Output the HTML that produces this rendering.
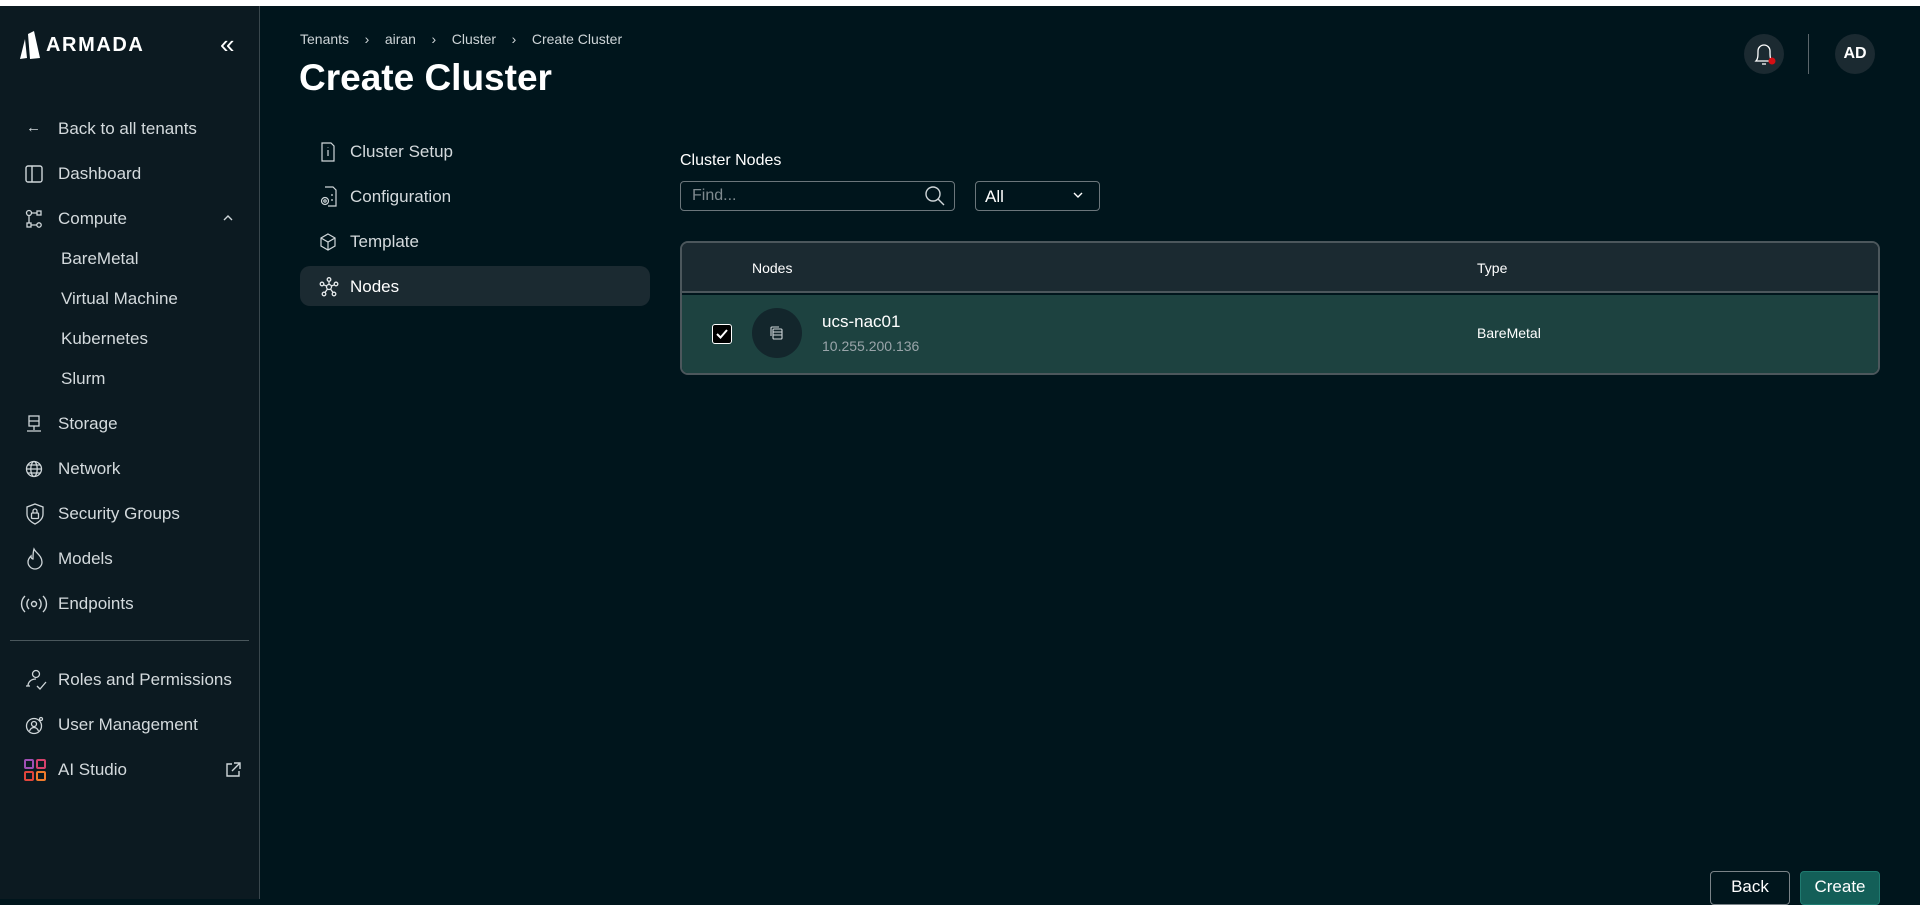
<!DOCTYPE html>
<html><head><style>
*{box-sizing:border-box;margin:0;padding:0}
body{width:1920px;height:899px;background:#00151c;font-family:"Liberation Sans",sans-serif;color:#e4e8ea;position:relative;overflow:hidden}
.top{position:absolute;left:0;top:0;width:1920px;height:6px;background:#fff}
.side{position:absolute;left:0;top:6px;width:260px;height:893px;background:#0c1a21;border-right:1px solid #3a474d}
.a{position:absolute;white-space:nowrap}
.nav{position:absolute;left:58px;font-size:17px;color:#d4dadd;transform:translateY(-50%)}
.sub{left:61px}
.ic{position:absolute;left:24px;transform:translateY(-50%)}
.step{position:absolute;left:350px;font-size:17px;color:#d4dadd;transform:translateY(-50%)}
.sic{position:absolute;left:319px;transform:translateY(-50%)}
</style></head><body>
<div class="top"></div>
<div class="side"></div>
<svg class="a" style="left:17px;top:31px" width="30" height="30" viewBox="0 0 30 30"><path d="M3 28 L8 8 L10 27Z M11 3 L17 0 L23 27 L13 28Z" fill="#fff"/></svg>
<div class="a" style="left:46px;top:34px;font-size:20px;font-weight:bold;letter-spacing:1.6px;color:#fff">ARMADA</div>
<div class="a" style="left:220px;top:29px;font-size:26px;color:#fff">«</div>

<div class="a" style="left:26px;top:119px;font-size:15px;color:#cfd6d9">←</div>
<div class="nav" style="top:129px">Back to all tenants</div>
<svg class="ic" style="top:174px" width="20" height="20" viewBox="0 0 20 20" fill="none" stroke="#cfd6d9" stroke-width="1.4"><rect x="2" y="2" width="16" height="16" rx="2"/><path d="M8 2v16"/></svg>
<div class="nav" style="top:174px">Dashboard</div>
<svg class="ic" style="top:219px" width="20" height="20" viewBox="0 0 20 20" fill="none" stroke="#cfd6d9" stroke-width="1.3"><circle cx="5" cy="4" r="2.5"/><rect x="13" y="2" width="4" height="4"/><rect x="3" y="14" width="4" height="4"/><circle cx="15" cy="16" r="2.2"/><path d="M5 7v7M7 16h6M7.5 4h5"/></svg>
<div class="nav" style="top:219px">Compute</div>
<svg class="a" style="left:222px;top:213px" width="12" height="10" viewBox="0 0 12 10" fill="none" stroke="#cfd6d9" stroke-width="1.4"><path d="M2 7l4-4 4 4"/></svg>
<div class="nav sub" style="top:259px">BareMetal</div>
<div class="nav sub" style="top:299px">Virtual Machine</div>
<div class="nav sub" style="top:339px">Kubernetes</div>
<div class="nav sub" style="top:379px">Slurm</div>
<svg class="ic" style="top:424px" width="20" height="20" viewBox="0 0 20 20" fill="none" stroke="#cfd6d9" stroke-width="1.3"><rect x="5" y="2" width="10" height="10"/><path d="M5 7h10M10 12v4M3 17h14"/></svg>
<div class="nav" style="top:424px">Storage</div>
<svg class="ic" style="top:469px" width="20" height="20" viewBox="0 0 20 20" fill="none" stroke="#cfd6d9" stroke-width="1.3"><circle cx="10" cy="10" r="7.5"/><ellipse cx="10" cy="10" rx="3.2" ry="7.5"/><path d="M2.5 10h15M4 6h12M4 14h12"/></svg>
<div class="nav" style="top:469px">Network</div>
<svg class="ic" style="top:514px" width="22" height="24" viewBox="0 0 22 24" fill="none" stroke="#cfd6d9" stroke-width="1.3"><path d="M11 2 L19 5 V12 C19 17 15 20 11 22 C7 20 3 17 3 12 V5Z"/><rect x="7.5" y="11" width="7" height="5.5" rx="1"/><path d="M9 11V9a2 2 0 0 1 4 0v2"/></svg>
<div class="nav" style="top:514px">Security Groups</div>
<svg class="ic" style="top:559px" width="22" height="24" viewBox="0 0 22 24" fill="none" stroke="#cfd6d9" stroke-width="1.3"><path d="M10 2 C12 6 18 9 18 15 A7 7 0 0 1 4 15 C4 12 6 10 7 9 C7 11 8 12 9 12 C9 8 9 5 10 2Z"/></svg>
<div class="nav" style="top:559px">Models</div>
<svg class="a" style="left:20px;top:594px" width="28" height="20" viewBox="0 0 28 20" fill="none" stroke="#cfd6d9" stroke-width="1.4"><circle cx="14" cy="10" r="2.5"/><path d="M9 5a7 7 0 0 0 0 10M19 5a7 7 0 0 1 0 10M5 2a11 11 0 0 0 0 16M23 2a11 11 0 0 1 0 16"/></svg>
<div class="nav" style="top:604px">Endpoints</div>
<div class="a" style="left:10px;top:640px;width:239px;height:1px;background:#4a575c"></div>
<svg class="ic" style="top:680px" width="24" height="24" viewBox="0 0 24 24" fill="none" stroke="#cfd6d9" stroke-width="1.3"><circle cx="12" cy="6" r="3.5"/><path d="M4 18c0-4 3-7 8-7M2 18h4M13 18l3 3 6-7"/></svg>
<div class="nav" style="top:680px">Roles and Permissions</div>
<svg class="ic" style="top:725px" width="22" height="22" viewBox="0 0 22 22" fill="none" stroke="#cfd6d9" stroke-width="1.3"><circle cx="10" cy="12" r="7.5"/><circle cx="10" cy="10" r="2.5"/><path d="M5.5 17c1-2.5 3-3.5 4.5-3.5s3.5 1 4.5 3.5"/><circle cx="17" cy="5" r="1.5"/></svg>
<div class="nav" style="top:725px">User Management</div>
<svg class="ic" style="top:770px" width="22" height="22" viewBox="0 0 22 22" fill="none" stroke-width="2"><rect x="1" y="1" width="8" height="8" rx="1" stroke="#a04fb5"/><rect x="13" y="1" width="8" height="8" rx="1" stroke="#d6416b"/><rect x="1" y="13" width="8" height="8" rx="1" stroke="#e2463c"/><rect x="13" y="13" width="8" height="8" rx="1" stroke="#f07b2c"/></svg>
<div class="nav" style="top:770px">AI Studio</div>
<svg class="a" style="left:224px;top:761px" width="18" height="18" viewBox="0 0 18 18" fill="none" stroke="#cfd6d9" stroke-width="1.4"><path d="M8 3H3v12h12v-5M10 2h6v6M16 2L8 10"/></svg>

<div class="a" style="left:300px;top:31px;font-size:14px;color:#cdd4d7">Tenants &nbsp;&nbsp;&nbsp;›&nbsp;&nbsp;&nbsp; airan &nbsp;&nbsp;&nbsp;›&nbsp;&nbsp;&nbsp; Cluster &nbsp;&nbsp;&nbsp;›&nbsp;&nbsp;&nbsp; Create Cluster</div>
<div class="a" style="left:299px;top:57px;font-size:37px;font-weight:bold;color:#fff">Create Cluster</div>

<div class="a" style="left:1744px;top:34px;width:40px;height:40px;border-radius:50%;background:#1b2a31"></div>
<svg class="a" style="left:1752px;top:40px" width="26" height="28" viewBox="0 0 26 28" fill="none" stroke="#fff" stroke-width="1.3"><path d="M4 21 C6 19 6 16 6 11 A6 6 0 0 1 18 11 C18 16 18 19 20 21Z M10 24h4"/><circle cx="20" cy="21" r="3.5" fill="#d40f14" stroke="none"/></svg>
<div class="a" style="left:1808px;top:34px;width:1px;height:40px;background:#5b666b"></div>
<div class="a" style="left:1835px;top:34px;width:40px;height:40px;border-radius:50%;background:#1b2a31;color:#fff;font-weight:bold;font-size:16px;text-align:center;line-height:40px">AD</div>

<svg class="sic" style="top:152px" width="18" height="20" viewBox="0 0 18 20" fill="none" stroke="#cfd6d9" stroke-width="1.2"><path d="M3 1h9l3 3v15H3z"/><path d="M9 8v6M9 5.5v.5"/></svg>
<div class="step" style="top:152px">Cluster Setup</div>
<svg class="sic" style="top:197px" width="20" height="22" viewBox="0 0 20 22" fill="none" stroke="#cfd6d9" stroke-width="1.2"><path d="M6 1h8l3 3v16H9"/><circle cx="6" cy="15" r="3.5"/><circle cx="6" cy="15" r="1.2"/><path d="M12 9h2M12 14h2"/></svg>
<div class="step" style="top:197px">Configuration</div>
<svg class="sic" style="top:242px" width="18" height="18" viewBox="0 0 18 18" fill="none" stroke="#cfd6d9" stroke-width="1.2"><path d="M9 1l7 4v8l-7 4-7-4V5z M2 5l7 4 7-4M9 9v8"/></svg>
<div class="step" style="top:242px">Template</div>
<div class="a" style="left:300px;top:266px;width:350px;height:40px;border-radius:10px;background:#1b2a31"></div>
<svg class="sic" style="top:287px" width="20" height="20" viewBox="0 0 20 20" fill="none" stroke="#e4e8ea" stroke-width="1.3"><circle cx="10" cy="10" r="2.5"/><circle cx="10" cy="2.5" r="1.8"/><circle cx="3" cy="7" r="1.8"/><circle cx="17" cy="7" r="1.8"/><circle cx="5" cy="17" r="1.8"/><circle cx="15" cy="17" r="1.8"/><path d="M10 4.3v3M4.6 7.8l3 1.2M15.4 7.8l-3 1.2M6 15.5l2.5-3.5M14 15.5l-2.5-3.5"/></svg>
<div class="step" style="top:287px;color:#fff">Nodes</div>

<div class="a" style="left:680px;top:152px;font-size:16px;color:#fff">Cluster Nodes</div>
<div class="a" style="left:680px;top:181px;width:275px;height:30px;border:1px solid #6b767b;border-radius:4px"></div>
<div class="a" style="left:692px;top:187px;font-size:16px;color:#7f8a8f">Find...</div>
<svg class="a" style="left:923px;top:184px" width="24" height="24" viewBox="0 0 24 24" fill="none" stroke="#cfd6d9" stroke-width="1.4"><circle cx="10" cy="10" r="7"/><path d="M15 15l6 6"/></svg>
<div class="a" style="left:975px;top:181px;width:125px;height:30px;border:1px solid #6b767b;border-radius:4px"></div>
<div class="a" style="left:985px;top:187px;font-size:17px;color:#fff">All</div>
<svg class="a" style="left:1072px;top:190px" width="12" height="10" viewBox="0 0 12 10" fill="none" stroke="#fff" stroke-width="1.4"><path d="M2 3l4 4 4-4"/></svg>

<div class="a" style="left:680px;top:241px;width:1200px;height:134px;border:2px solid #4c575c;border-radius:8px;overflow:hidden">
 <div style="position:absolute;left:0;top:0;width:100%;height:50px;background:#1b2a31;border-bottom:2px solid #4c575c"></div>
 <div style="position:absolute;left:0;top:52px;width:100%;height:80px;background:#1d4240"></div>
</div>
<div class="a" style="left:752px;top:260px;font-size:14px;color:#fff">Nodes</div>
<div class="a" style="left:1477px;top:260px;font-size:14px;color:#fff">Type</div>
<div class="a" style="left:712px;top:324px;width:20px;height:20px;border:1.5px solid #fff;border-radius:3px;background:#000"></div>
<svg class="a" style="left:714px;top:326px" width="16" height="16" viewBox="0 0 16 16" fill="none" stroke="#fff" stroke-width="2"><path d="M3 8l3.5 3.5L13 4"/></svg>
<div class="a" style="left:752px;top:308px;width:50px;height:50px;border-radius:50%;background:#13262c"></div>
<svg class="a" style="left:769px;top:325px" width="16" height="16" viewBox="0 0 16 16" fill="none" stroke="#cfd6d9" stroke-width="1.1"><rect x="4" y="4" width="9" height="10" rx="1"/><path d="M4 7h9M4 10h9M2 11V3a1 1 0 0 1 1-1h7"/></svg>
<div class="a" style="left:822px;top:312px;font-size:17px;color:#fff">ucs-nac01</div>
<div class="a" style="left:822px;top:338px;font-size:14px;color:#9aa5aa">10.255.200.136</div>
<div class="a" style="left:1477px;top:325px;font-size:14px;color:#fff">BareMetal</div>

<div class="a" style="left:1710px;top:871px;width:80px;height:34px;border:1px solid #7a8388;border-radius:4px;font-size:17px;color:#fff;text-align:center;line-height:30px">Back</div>
<div class="a" style="left:1800px;top:871px;width:80px;height:34px;border:1px solid #1f7a70;border-radius:4px;background:#135f58;font-size:17px;color:#fff;text-align:center;line-height:30px">Create</div>
</body></html>
